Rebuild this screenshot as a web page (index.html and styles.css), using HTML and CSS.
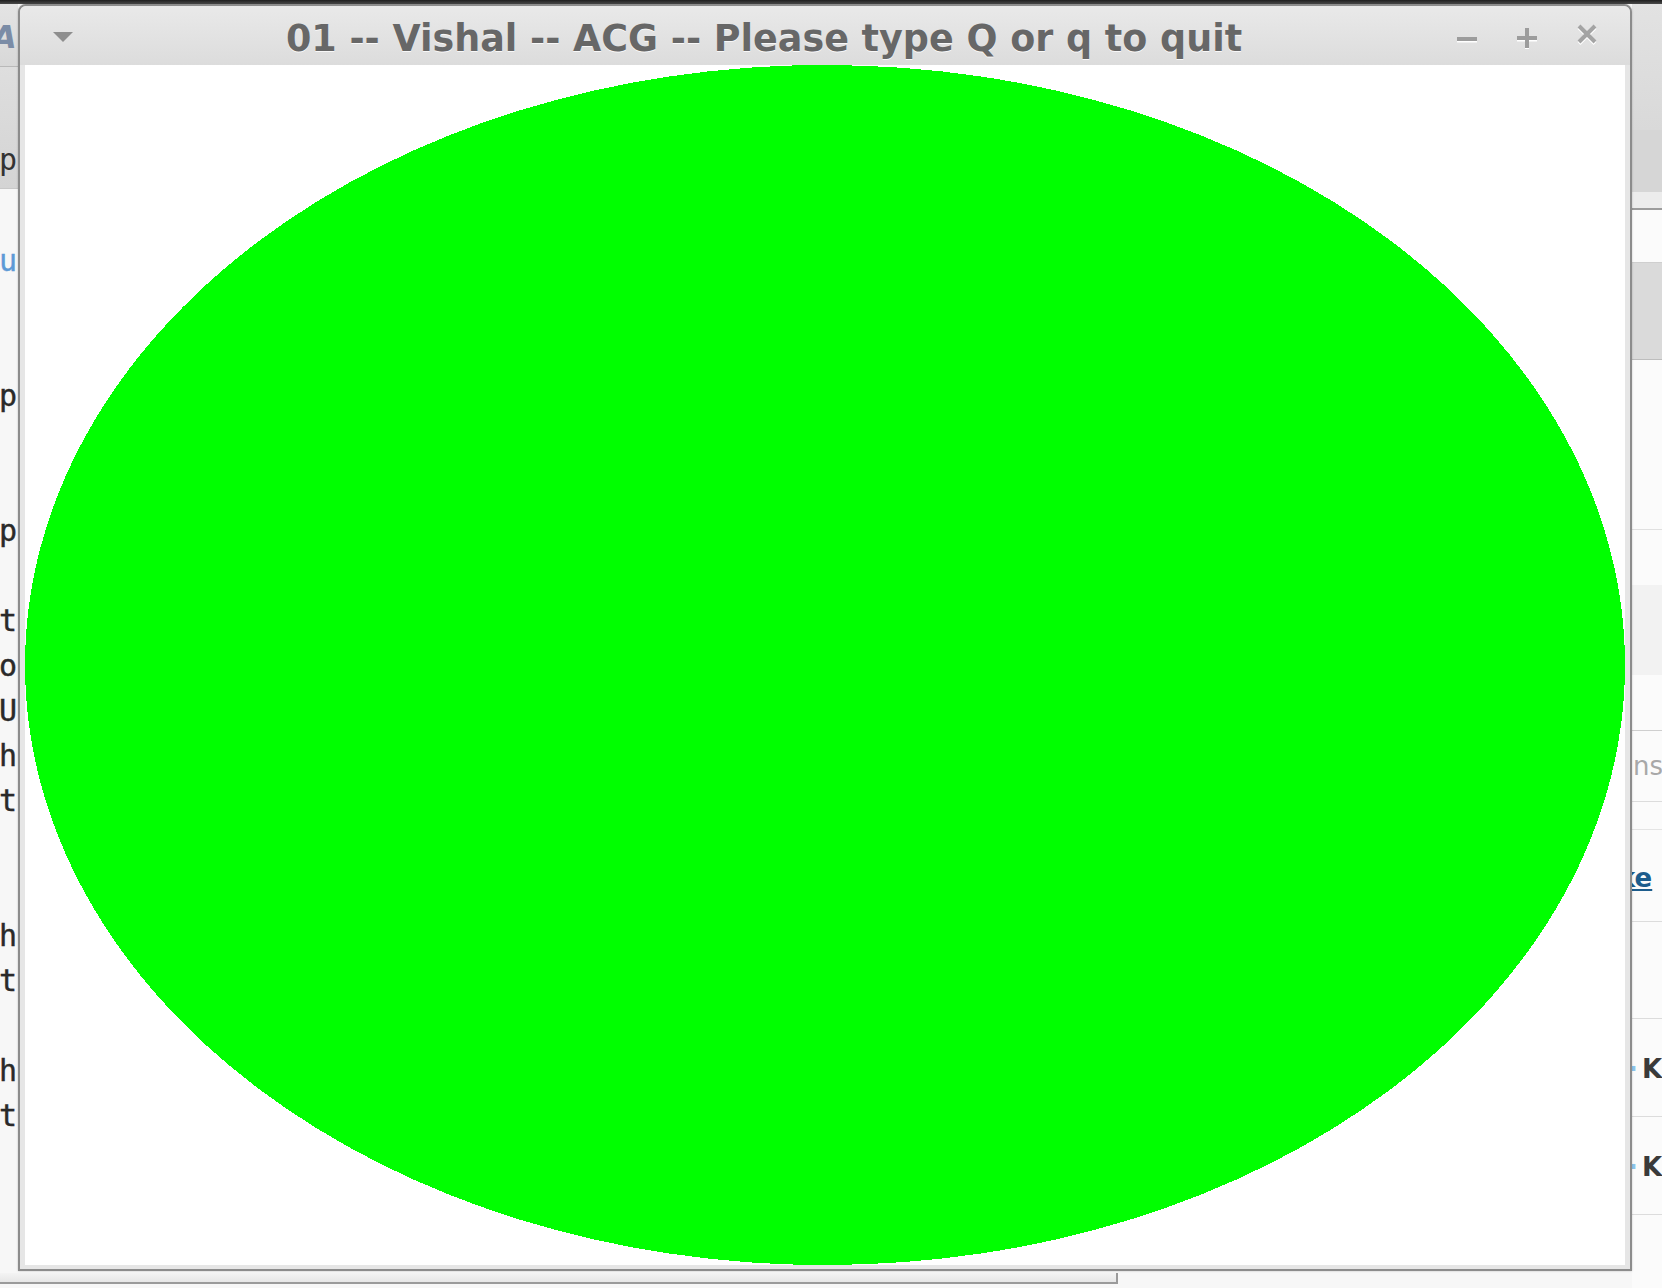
FILE: index.html
```html
<!DOCTYPE html>
<html lang="en">
<head>
    <meta charset="UTF-8">
    <title>01 -- Vishal -- ACG -- Please type Q or q to quit</title>
    <link rel="stylesheet" href="styles.css">
</head>
<body>

    <div class="screen">
        <div class="top-strip"></div>

        <!-- the browser window that sits behind the GL window -->
        <div class="backdrop">
            <div class="side-left">
                <div class="lt-title">A</div>
                <div class="lt-toolbar">p</div>
                <div class="lt-lines">
                    <div class="ln link">u</div>
                    <div class="ln"></div>
                    <div class="ln"></div>
                    <div class="ln">p</div>
                    <div class="ln"></div>
                    <div class="ln"></div>
                    <div class="ln">p</div>
                    <div class="ln"></div>
                    <div class="ln">t</div>
                    <div class="ln">o</div>
                    <div class="ln">U</div>
                    <div class="ln">h</div>
                    <div class="ln">t</div>
                    <div class="ln"></div>
                    <div class="ln"></div>
                    <div class="ln">h</div>
                    <div class="ln">t</div>
                    <div class="ln"></div>
                    <div class="ln">h</div>
                    <div class="ln">t</div>
                </div>
            </div>

            <div class="side-right">
                <div class="rt-title"></div>
                <div class="rt-bar"></div>
                <div class="rt-tabs"></div>
                <div class="rt-gap"></div>
                <div class="rt-block"></div>
                <div class="rt-white"></div>
                <div class="rt-spacer"></div>
                <div class="rt-band"></div>
                <div class="rt-spacer rt-ruled"></div>
                <div class="rt-row rt-hint">ns</div>
                <div class="rt-thin"></div>
                <div class="rt-row rt-link"><span>ke</span></div>
                <div class="rt-row rt-empty"></div>
                <div class="rt-row rt-item"><i>·</i>K</div>
                <div class="rt-row rt-item"><i>·</i>K</div>
            </div>

            <div class="bottom-row">
                <div class="hscroll"></div>
            </div>
        </div>

        <!-- freeglut window -->
        <div class="window">
            <div class="titlebar">
                <div class="wm-menu">
                    <svg width="20" height="11" viewBox="0 0 20 11"><polygon points="0,0 20,0 10,10" fill="#8e8e8e"/></svg>
                </div>
                <div class="wm-title">01 -- Vishal -- ACG -- Please type Q or q to quit</div>
                <div class="wm-buttons">
                    <svg class="wm-btn" width="20" height="20" viewBox="0 0 20 20">
                        <line x1="0" y1="12.5" x2="20" y2="12.5" stroke="#fff" stroke-width="4"/>
                        <line x1="0" y1="11" x2="20" y2="11" stroke="#9c9c9c" stroke-width="4"/>
                    </svg>
                    <svg class="wm-btn" width="20" height="20" viewBox="0 0 20 20">
                        <path d="M0 11.5H20M10 1.5V21" stroke="#fff" stroke-width="4"/>
                        <path d="M0 10H20M10 0V20" stroke="#9c9c9c" stroke-width="4"/>
                    </svg>
                    <svg class="wm-btn wm-close" width="20" height="20" viewBox="0 0 20 20">
                        <path d="M2 3.5L18 19.5M18 3.5L2 19.5" stroke="#fff" stroke-width="4"/>
                        <path d="M2 2L18 18M18 2L2 18" stroke="#a4a4a4" stroke-width="4"/>
                    </svg>
                </div>
            </div>
            <div class="frame">
                <svg class="canvas" width="1600" height="1200" viewBox="0 0 1600 1200" shape-rendering="crispEdges">
                    <ellipse cx="800" cy="600" rx="800" ry="600" fill="#00ff00"/>
                </svg>
            </div>
        </div>
    </div>

</body>
</html>
```

FILE: styles.css
```css
body {
    margin: 0;
    font-family: "DejaVu Sans", sans-serif;
    background-color: #f7f7f7;
}
.screen {
    position: relative;
    width: 1662px;
    height: 1288px;
    overflow: hidden;
    background-color: #f7f7f7;
}
.top-strip {
    height: 4px;
    background: linear-gradient(#1e1e1e, #4a4a4a);
}

/* background window */
.backdrop {
    display: grid;
    grid-template-columns: 18px 1fr 30px;
    grid-template-rows: 1267px 17px;
    height: 1284px;
}
.side-left {
    grid-column: 1;
    grid-row: 1;
    overflow: hidden;
}
.lt-title {
    height: 62px;
    border-bottom: 1px solid #b9b9b9;
    background: linear-gradient(#e4e4e4, #d8d8d8);
    color: #7b8ca6;
    font-weight: bold;
    font-style: italic;
    font-size: 32px;
    line-height: 66px;
    margin-left: -8px;
}
.lt-toolbar {
    height: 122px;
    border-bottom: 1px solid #c8c8c8;
    background: linear-gradient(#dedede, #d4d4d4);
    font-family: "DejaVu Sans Mono", monospace;
    font-size: 30px;
    line-height: 30px;
    color: #333;
    box-sizing: border-box;
    padding-top: 78px;
    margin-left: -1px;
}
.lt-lines {
    padding-top: 49px;
    font-family: "DejaVu Sans Mono", monospace;
    font-size: 30px;
    color: #2a2a2a;
    -webkit-text-stroke: 0.4px #2a2a2a;
}
.ln {
    height: 45px;
    line-height: 45px;
    margin-left: -1px;
}
.ln.link {
    color: #5d9ad6;
    -webkit-text-stroke: 0.4px #5d9ad6;
}

.side-right {
    grid-column: 3;
    grid-row: 1 / 3;
    background-color: #fbfbfb;
    overflow: hidden;
    white-space: nowrap;
    font-size: 26px;
}
.rt-title {
    height: 126px;
    background: linear-gradient(#e2e2e2, #d9d9d9);
}
.rt-bar {
    height: 62px;
    background-color: #d6d6d6;
}
.rt-tabs {
    height: 16px;
    background-color: #ececec;
    border-bottom: 2px solid #9c9c9c;
}
.rt-gap {
    height: 52px;
    border-bottom: 1px solid #cfcfcf;
}
.rt-block {
    height: 96px;
    background-color: #dadada;
    border-bottom: 1px solid #bdbdbd;
}
.rt-white {
    height: 169px;
    border-bottom: 1px solid #e0e0e0;
}
.rt-spacer {
    height: 55px;
}
.rt-ruled {
    border-bottom: 1px solid #cfcfcf;
}
.rt-band {
    height: 90px;
    background-color: #f2f2f2;
}
.rt-row {
    height: 70px;
    line-height: 70px;
    border-bottom: 1px solid #dcdcdc;
}
.rt-hint {
    color: #a8a8a8;
    padding-left: 1px;
}
.rt-thin {
    height: 27px;
    border-bottom: 1px solid #e4e4e4;
}
.rt-link {
    height: 91px;
    line-height: 96px;
    margin-left: -14px;
}
.rt-link span {
    color: #1c5c8c;
    font-weight: bold;
    text-decoration: underline;
}
.rt-empty {
    height: 96px;
}
.rt-item {
    height: 97px;
    line-height: 101px;
    color: #3a3a3a;
    font-weight: bold;
}
.rt-item i {
    font-style: normal;
    color: #8cc4ec;
    display: inline-block;
    width: 14px;
    margin-left: -4px;
}

.bottom-row {
    grid-column: 1 / 3;
    grid-row: 2;
    padding-top: 2px;
}
.hscroll {
    width: 1116px;
    height: 9px;
    background: linear-gradient(#f4f4f4, #e6e6e6);
    border-bottom: 2px solid #9a9a9a;
    border-right: 2px solid #9a9a9a;
}

/* GL window on top */
.window {
    position: absolute;
    left: 18px;
    top: 4px;
    width: 1610px;
    border: 2px solid #8c8c8c;
    border-radius: 8px 8px 0 0;
    background-color: #e4e4e4;
    box-shadow: 0 0 2px rgba(0, 0, 0, 0.25);
}
.titlebar {
    display: flex;
    align-items: center;
    height: 59px;
    background: linear-gradient(#e9e9e9, #dcdcdc);
    border-radius: 6px 6px 0 0;
}
.wm-menu {
    width: 35px;
    padding-left: 33px;
    display: flex;
    align-items: center;
    margin-top: 3px;
}
.wm-title {
    flex: 1;
    text-align: center;
    font-family: "DejaVu Sans", sans-serif;
    font-weight: bold;
    font-size: 36.5px;
    color: #676767;
    text-shadow: 0 1px 0 rgba(255, 255, 255, 0.8);
    white-space: nowrap;
    margin-top: 6px;
}
.wm-buttons {
    display: flex;
    gap: 40px;
    padding-left: 17px;
    padding-right: 33px;
    margin-top: 5px;
}
.wm-btn {
    overflow: visible;
}
.wm-close {
    margin-top: -4px;
}
.frame {
    padding: 0 5px 4px 5px;
    background-color: #e6e6e6;
}
.canvas {
    display: block;
    background-color: #fff;
}
```
